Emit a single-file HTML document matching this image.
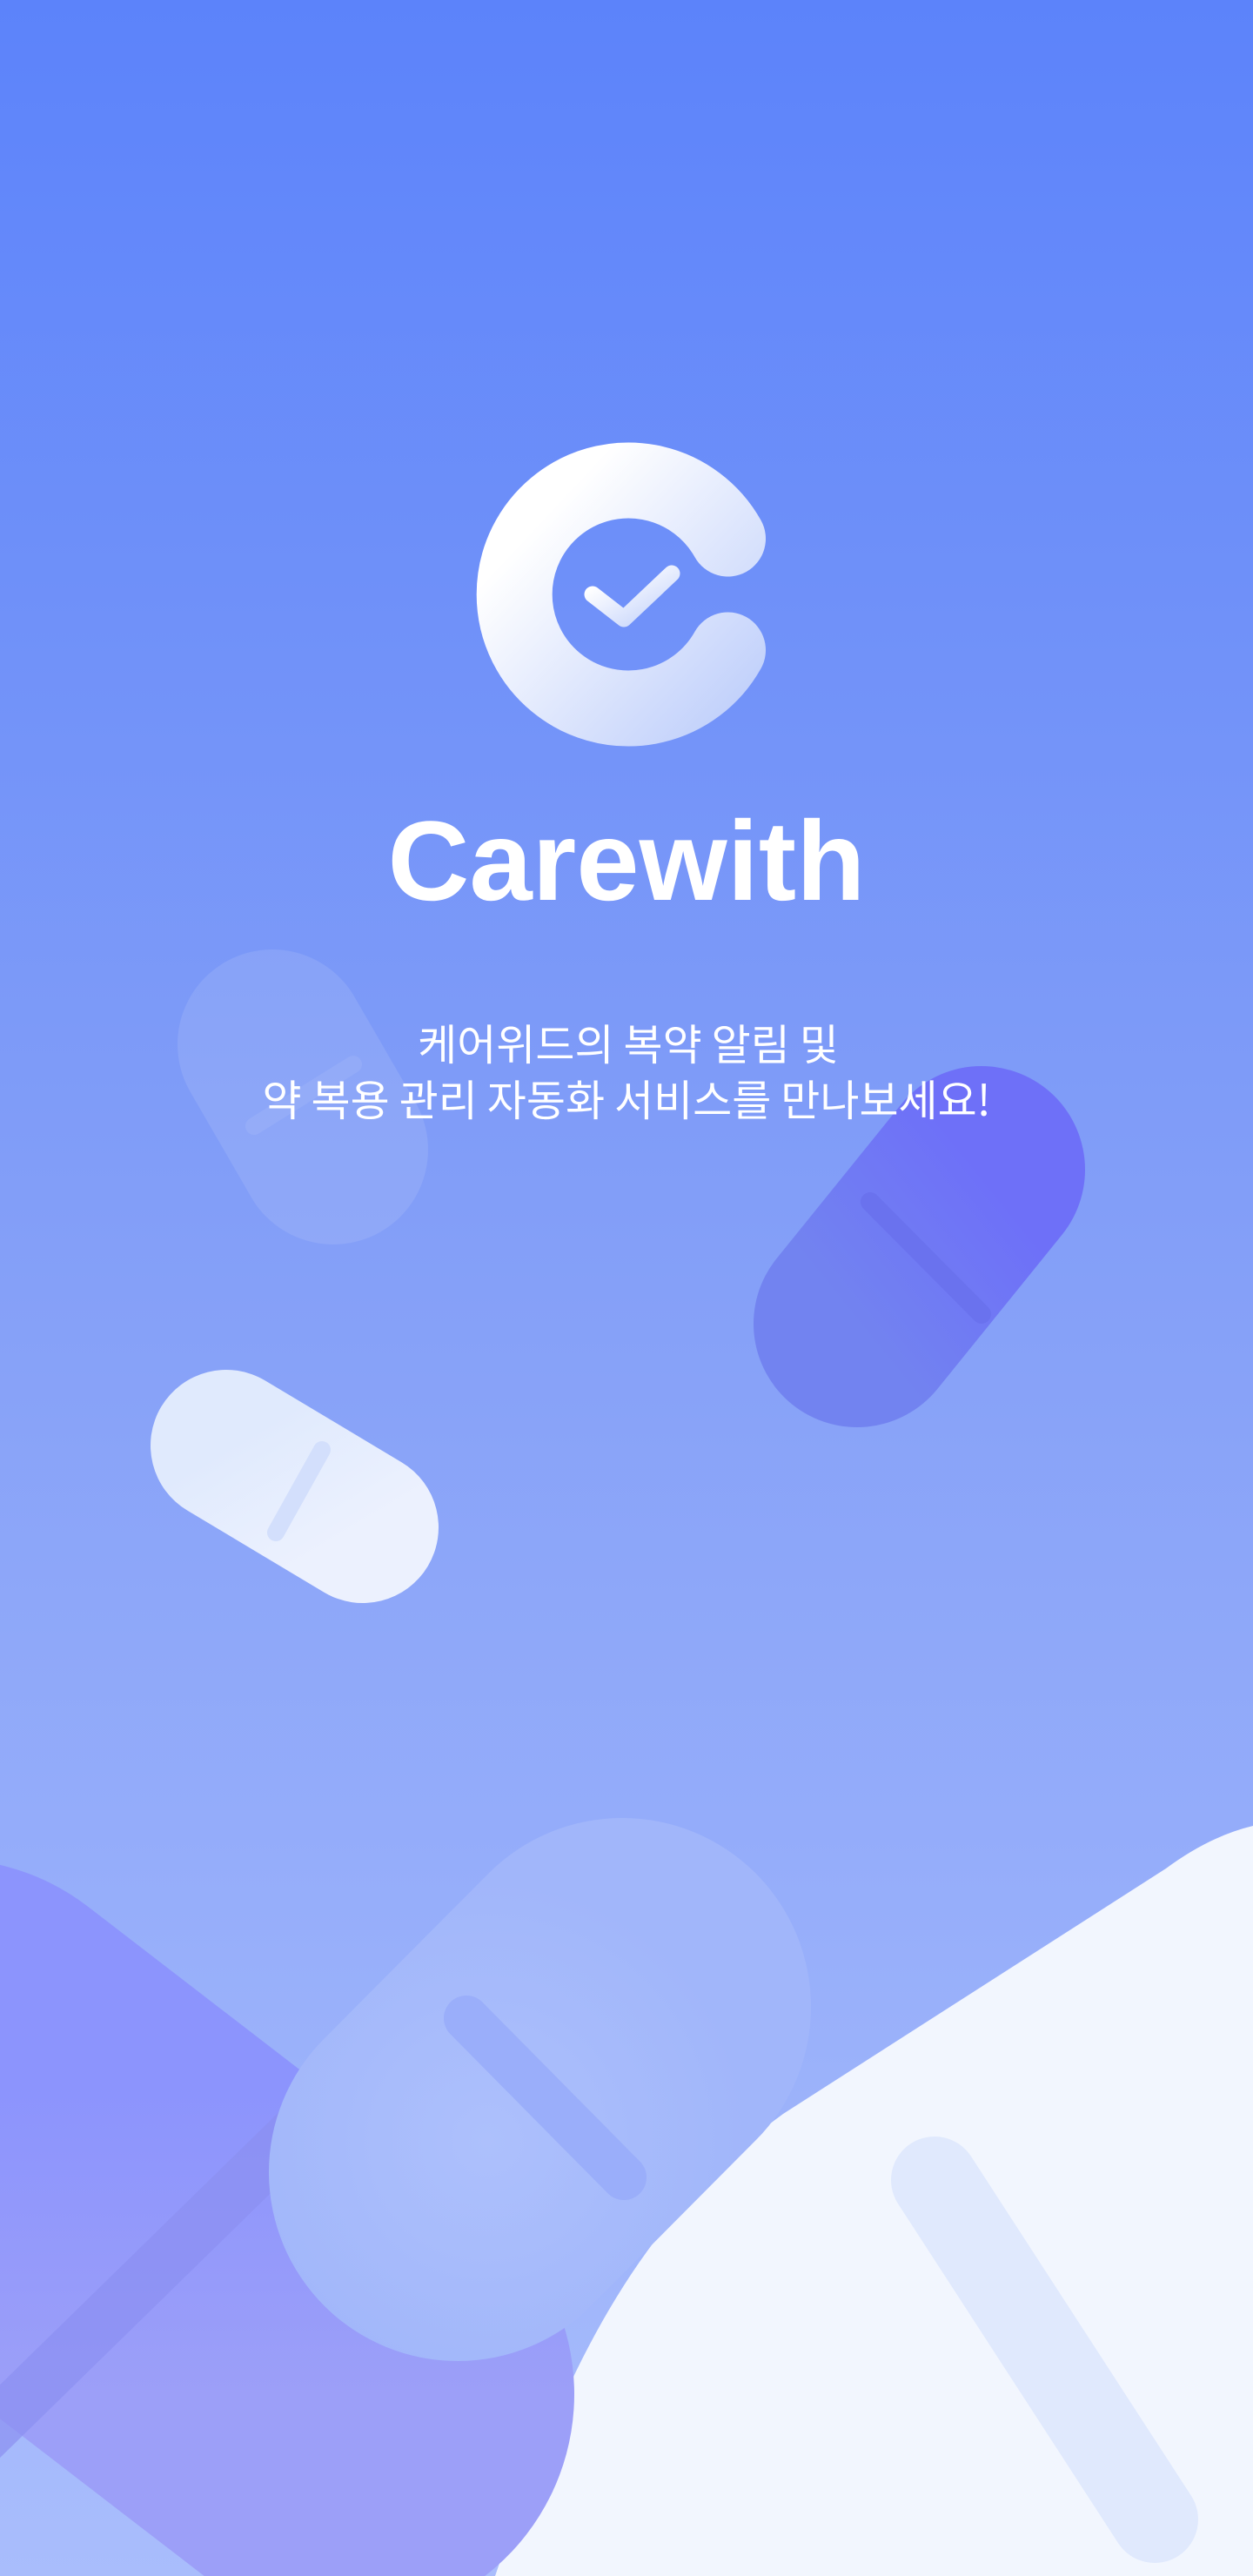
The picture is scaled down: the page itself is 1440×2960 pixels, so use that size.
<!DOCTYPE html>
<html><head><meta charset="utf-8"><style>
html,body{margin:0;padding:0;width:1440px;height:2960px;overflow:hidden}
svg{display:block}
</style></head><body>
<svg width="1440" height="2960" viewBox="0 0 1440 2960" xmlns="http://www.w3.org/2000/svg">
<defs>
<linearGradient id="bg" x1="0" y1="0" x2="0" y2="1">
<stop offset="0" stop-color="#5c83fa"/><stop offset="0.5" stop-color="#85a0f8"/><stop offset="1" stop-color="#a9bdfc"/>
</linearGradient>
<linearGradient id="cg" x1="0" y1="0" x2="1" y2="1">
<stop offset="0.15" stop-color="#ffffff"/><stop offset="1" stop-color="#c3d2fb"/>
</linearGradient>
<linearGradient id="pp" x1="1" y1="0" x2="0" y2="1">
<stop offset="0" stop-color="#6e70f8"/><stop offset="1" stop-color="#7283f0"/>
</linearGradient>
<linearGradient id="wp" x1="0" y1="0" x2="1" y2="1">
<stop offset="0" stop-color="#e0eafd"/><stop offset="1" stop-color="#ecf1fe"/>
</linearGradient>
<linearGradient id="bp" x1="0" y1="0" x2="0" y2="1">
<stop offset="0" stop-color="#8c94fd"/><stop offset="1" stop-color="#9c9ff8"/>
</linearGradient>
<radialGradient id="cp" gradientUnits="userSpaceOnUse" cx="560" cy="2460" r="300">
<stop offset="0" stop-color="#adc0fc"/><stop offset="1" stop-color="#a1b6fa"/>
</radialGradient>
</defs>
<rect width="1440" height="2960" fill="url(#bg)"/>

<!-- faint pill top-left -->
<line x1="313" y1="1200" x2="383" y2="1321" stroke="#ffffff" stroke-opacity="0.1" stroke-width="218" stroke-linecap="round"/>
<line x1="292" y1="1294" x2="406" y2="1223" stroke="#ffffff" stroke-opacity="0.07" stroke-width="20" stroke-linecap="round"/>

<!-- purple pill right -->
<line x1="1128" y1="1344" x2="985" y2="1521" stroke="url(#pp)" stroke-width="238" stroke-linecap="round"/>
<line x1="1000" y1="1381" x2="1128" y2="1510" stroke="#6a72ee" stroke-width="22" stroke-linecap="round"/>

<!-- white pill left -->
<line x1="260" y1="1661" x2="417" y2="1755" stroke="url(#wp)" stroke-width="174" stroke-linecap="round"/>
<line x1="370" y1="1666" x2="317" y2="1761" stroke="#d3dffc" stroke-width="20" stroke-linecap="round"/>

<!-- white shape -->
<path d="M1440 2098 Q1390 2110 1340 2147 L900 2429 C720 2560 640 2750 569 2960 L1440 2960 Z" fill="#f2f6fe"/>
<line x1="1074" y1="2505" x2="1327" y2="2895" stroke="#e0e9fd" stroke-width="100" stroke-linecap="round"/>

<!-- bottom purple pill -->
<line x1="-60" y1="2400" x2="396" y2="2751" stroke="url(#bp)" stroke-width="528" stroke-linecap="round"/>
<line x1="-100" y1="2880" x2="349" y2="2441" stroke="#8c90f2" stroke-width="60" stroke-linecap="round" opacity="0.7"/>

<!-- center pill -->
<line x1="715" y1="2306" x2="526" y2="2496" stroke="url(#cp)" stroke-width="434" stroke-linecap="round"/>
<line x1="536" y1="2319" x2="717" y2="2502" stroke="#9aaefa" stroke-width="52" stroke-linecap="round"/>

<!-- logo C -->
<path d="M836.5 619 A131 131 0 1 0 836.5 747" fill="none" stroke="url(#cg)" stroke-width="87" stroke-linecap="round"/>
<polyline points="681,683 717,711 772,659" fill="none" stroke="url(#cg)" stroke-width="19" stroke-linecap="round" stroke-linejoin="round"/>

<text x="720" y="1034" text-anchor="middle" font-family="Liberation Sans, sans-serif" font-weight="bold" font-size="130" fill="#ffffff">Carewith</text>
<text x="722" y="1218" text-anchor="middle" font-family="Noto Sans CJK KR, sans-serif" font-size="49" fill="#ffffff">케어위드의 복약 알림 및</text>
<text x="720" y="1282" text-anchor="middle" font-family="Noto Sans CJK KR, sans-serif" font-size="49" fill="#ffffff">약 복용 관리 자동화 서비스를 만나보세요!</text>
</svg>
</body></html>
